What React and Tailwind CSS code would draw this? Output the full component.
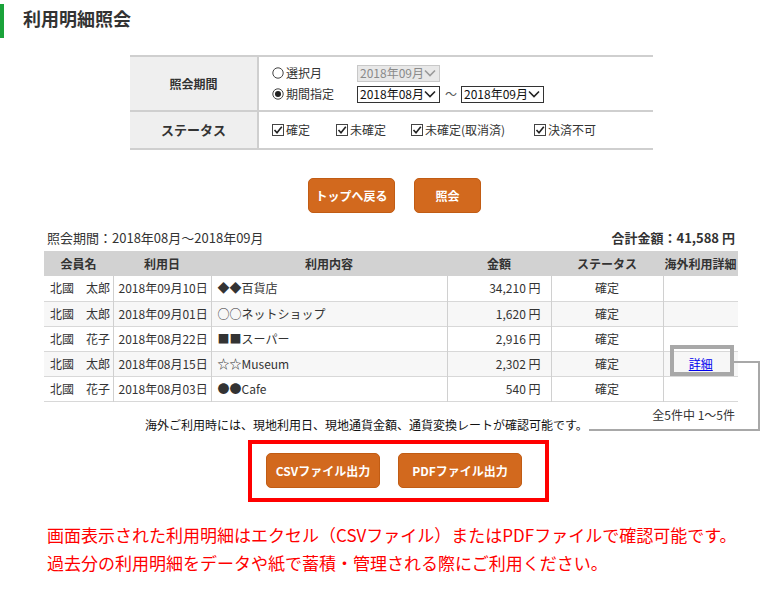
import React from 'react';

const Chevron = ({ color = '#333' }) => (
  <svg width="12" height="8" viewBox="0 0 12 8">
    <path d="M1 1.5 L6 6.5 L11 1.5" fill="none" stroke={color} strokeWidth="1.6" />
  </svg>
);

const Select = ({ value, disabled }) => (
  <div
    className={
      'flex items-center justify-between w-[83px] h-[17px] pl-[2px] pr-[3px] text-[12px] leading-none ' +
      (disabled ? 'bg-[#e8e8e8] border border-[#c8c8c8] text-[#8a8a8a]' : 'bg-white border border-[#333] text-[#111]')
    }
  >
    <span>{value}</span>
    <Chevron color={disabled ? '#9a9a9a' : '#222'} />
  </div>
);

const Radio = ({ checked, label }) => (
  <div className="flex items-center gap-[2px] text-[12px] text-[#333] w-[85px]">
    <svg width="12" height="12" viewBox="0 0 12 12">
      <circle cx="6" cy="6" r="5.2" fill="white" stroke="#444" strokeWidth="1" />
      {checked && <circle cx="6" cy="6" r="3" fill="#222" />}
    </svg>
    <span>{label}</span>
  </div>
);

const Check = ({ label, w }) => (
  <div className={'flex items-center gap-[2px] text-[12px] text-[#333] ' + w}>
    <svg width="12" height="12" viewBox="0 0 12 12">
      <rect x="0.5" y="0.5" width="11" height="11" fill="white" stroke="#444" />
      <path d="M2.5 6 L5 8.8 L9.8 2.8" fill="none" stroke="#222" strokeWidth="1.6" />
    </svg>
    <span>{label}</span>
  </div>
);

const Btn = ({ children, w }) => (
  <button className={'h-[35px] rounded-[5px] bg-[#d2691e] border border-[#c15c14] text-white text-[12px] font-bold ' + w}>
    {children}
  </button>
);

const rows = [
  ['北國　太郎', '2018年09月10日', '◆◆百貨店', '34,210 円', '確定', false],
  ['北國　太郎', '2018年09月01日', '○○ネットショップ', '1,620 円', '確定', false],
  ['北國　花子', '2018年08月22日', '■■スーパー', '2,916 円', '確定', false],
  ['北國　太郎', '2018年08月15日', '☆☆Museum', '2,302 円', '確定', true],
  ['北國　花子', '2018年08月03日', '●●Cafe', '540 円', '確定', false],
];

export default function App() {
  return (
    <div
      className="relative w-[762px] h-[604px] bg-white text-[#333] overflow-hidden"
      style={{ fontFamily: '"Noto Sans CJK JP", "Noto Sans", sans-serif' }}
    >
      {/* heading */}
      <div className="flex items-start h-[42px] pt-[4px]">
        <div className="w-[4px] h-[34px] bg-[#1aa33a]" />
        <h1 className="ml-[19px] mt-[3px] text-[18px] leading-[22px] font-bold text-[#333]">利用明細照会</h1>
      </div>

      {/* search form */}
      <div className="ml-[130px] mt-[13px] w-[523px] border-t-2 border-b-2 border-[#cfcfcf]">
        <div className="flex h-[55px] border-b-2 border-[#cfcfcf]">
          <div className="w-[129px] bg-[#efefef] border-r-2 border-[#cfcfcf] flex items-center justify-center text-[12px] font-bold">
            照会期間
          </div>
          <div className="flex flex-col justify-center gap-[3px] pl-[13px]">
            <div className="flex items-center">
              <Radio label="選択月" />
              <Select value="2018年09月" disabled />
            </div>
            <div className="flex items-center">
              <Radio label="期間指定" checked />
              <Select value="2018年08月" />
              <span className="ml-[5px] mr-[4px] text-[12px] text-[#555]">～</span>
              <Select value="2018年09月" />
            </div>
          </div>
        </div>
        <div className="flex h-[36px]">
          <div className="w-[129px] bg-[#efefef] border-r-2 border-[#cfcfcf] flex items-center justify-center text-[13px] font-bold">
            ステータス
          </div>
          <div className="flex items-center pl-[13px]">
            <Check label="確定" w="w-[64px]" />
            <Check label="未確定" w="w-[75px]" />
            <Check label="未確定(取消済)" w="w-[123px]" />
            <Check label="決済不可" w="" />
          </div>
        </div>
      </div>

      {/* buttons */}
      <div className="ml-[308px] mt-[28px] flex gap-[19px]">
        <Btn w="w-[87px] h-[34px]">トップへ戻る</Btn>
        <Btn w="w-[67px] h-[34px]">照会</Btn>
      </div>

      {/* summary */}
      <div className="mx-[27px] ml-[47px] mt-[16px] flex justify-between text-[13px] leading-[18px]">
        <span>照会期間：2018年08月～2018年09月</span>
        <span className="font-bold">合計金額：41,588 円</span>
      </div>

      {/* result table */}
      <div className="relative ml-[44px] mt-[4px] w-[694px]">
        <table className="w-full border-collapse text-[12px] table-fixed">
          <colgroup>
            <col className="w-[69px]" />
            <col className="w-[98px]" />
            <col className="w-[236px]" />
            <col className="w-[104px]" />
            <col className="w-[112px]" />
            <col className="w-[75px]" />
          </colgroup>
          <thead>
            <tr className="h-[25px] bg-[#d2d2d2] font-bold">
              <th className="font-bold">会員名</th>
              <th className="font-bold">利用日</th>
              <th className="font-bold">利用内容</th>
              <th className="font-bold">金額</th>
              <th className="font-bold">ステータス</th>
              <th className="font-bold whitespace-nowrap">海外利用詳細</th>
            </tr>
          </thead>
          <tbody>
            {rows.map((r, i) => (
              <tr key={i} className={'h-[25px] border-b border-[#d8d8d8] ' + (i % 2 ? 'bg-[#f7f7f7]' : 'bg-white')}>
                <td className="pl-[6px] border-r border-[#d0d0d0] whitespace-nowrap">{r[0]}</td>
                <td className="pl-[5px] border-r border-[#d0d0d0] whitespace-nowrap">{r[1]}</td>
                <td className="pl-[6px] border-r border-[#d0d0d0]">{r[2]}</td>
                <td className="pr-[10px] text-right border-r border-[#d0d0d0]">{r[3]}</td>
                <td className="text-center border-r border-[#d0d0d0]">{r[4]}</td>
                <td className="text-center">
                  {r[5] && <a href="#" className="text-[#0000ee] underline">詳細</a>}
                </td>
              </tr>
            ))}
          </tbody>
        </table>
        {/* highlight around detail link */}
        <div className="absolute left-[626px] top-[94px] w-[64px] h-[31px] border-4 border-[#a8a8a8]" />
      </div>

      {/* notes below table */}
      <div className="relative h-[38px]">
        <div className="absolute right-[27px] top-[5px] text-[12px] leading-[16px] text-[#333]">全5件中 1～5件</div>
        <div className="absolute left-[145px] top-[15px] text-[12px] leading-[16px] text-[#111]">
          海外ご利用時には、現地利用日、現地通貨金額、通貨変換レートが確認可能です。
        </div>
      </div>

      {/* callout line */}
      <svg className="absolute left-0 top-0 pointer-events-none" width="762" height="604">
        <polyline points="734,362 759,362 759,430 589,430" fill="none" stroke="#a8a8a8" strokeWidth="2" />
      </svg>

      {/* export buttons */}
      <div className="ml-[248px] w-[301px] h-[62px] border-4 border-[#ff0000] flex items-center gap-[18px] pl-[14px]">
        <Btn w="w-[114px]">CSVファイル出力</Btn>
        <Btn w="w-[124px]">PDFファイル出力</Btn>
      </div>

      {/* red message */}
      <div className="ml-[47px] mt-[19px] text-[17px] leading-[28px] text-[#ff0000]">
        <p>画面表示された利用明細はエクセル（CSVファイル）またはPDFファイルで確認可能です。</p>
        <p>過去分の利用明細をデータや紙で蓄積・管理される際にご利用ください。</p>
      </div>
    </div>
  );
}
